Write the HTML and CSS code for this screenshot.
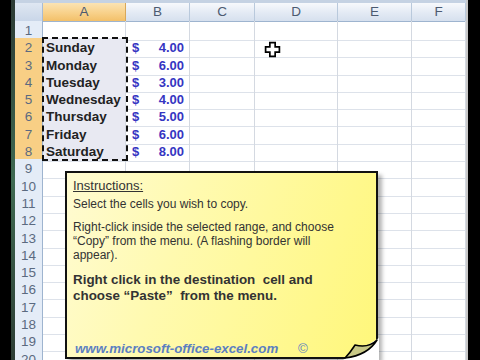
FILE: index.html
```html
<!DOCTYPE html>
<html lang="en">
<head>
  <meta charset="UTF-8">
  <title>Copy and Paste</title>
  <link rel="stylesheet" href="styles.css">
</head>
<body>
  <div class="screen">
    <div class="edge-black"></div>
    <div class="edge-green"></div>

    <div class="sheet">
      <div class="band"></div>
      <div class="row head">
        <div class="corner"></div>
        <div class="col sel">A</div>
        <div class="col">B</div>
        <div class="col">C</div>
        <div class="col">D</div>
        <div class="col">E</div>
        <div class="col">F</div>
      </div>
      <div class="row"><div class="num">1</div><div class="c"></div><div class="c"></div><div class="c"></div><div class="c"></div><div class="c"></div><div class="c"></div></div>
      <div class="row"><div class="num sel">2</div><div class="c day">Sunday</div><div class="c money"><span>$</span><span>4.00</span></div><div class="c"></div><div class="c"></div><div class="c"></div><div class="c"></div></div>
      <div class="row"><div class="num sel">3</div><div class="c day">Monday</div><div class="c money"><span>$</span><span>6.00</span></div><div class="c"></div><div class="c"></div><div class="c"></div><div class="c"></div></div>
      <div class="row"><div class="num sel">4</div><div class="c day">Tuesday</div><div class="c money"><span>$</span><span>3.00</span></div><div class="c"></div><div class="c"></div><div class="c"></div><div class="c"></div></div>
      <div class="row"><div class="num sel">5</div><div class="c day">Wednesday</div><div class="c money"><span>$</span><span>4.00</span></div><div class="c"></div><div class="c"></div><div class="c"></div><div class="c"></div></div>
      <div class="row"><div class="num sel">6</div><div class="c day">Thursday</div><div class="c money"><span>$</span><span>5.00</span></div><div class="c"></div><div class="c"></div><div class="c"></div><div class="c"></div></div>
      <div class="row"><div class="num sel">7</div><div class="c day">Friday</div><div class="c money"><span>$</span><span>6.00</span></div><div class="c"></div><div class="c"></div><div class="c"></div><div class="c"></div></div>
      <div class="row"><div class="num sel">8</div><div class="c day">Saturday</div><div class="c money"><span>$</span><span>8.00</span></div><div class="c"></div><div class="c"></div><div class="c"></div><div class="c"></div></div>
      <div class="row"><div class="num">9</div><div class="c"></div><div class="c"></div><div class="c"></div><div class="c"></div><div class="c"></div><div class="c"></div></div>
      <div class="row"><div class="num">10</div><div class="c"></div><div class="c"></div><div class="c"></div><div class="c"></div><div class="c"></div><div class="c"></div></div>
      <div class="row"><div class="num">11</div><div class="c"></div><div class="c"></div><div class="c"></div><div class="c"></div><div class="c"></div><div class="c"></div></div>
      <div class="row"><div class="num">12</div><div class="c"></div><div class="c"></div><div class="c"></div><div class="c"></div><div class="c"></div><div class="c"></div></div>
      <div class="row"><div class="num">13</div><div class="c"></div><div class="c"></div><div class="c"></div><div class="c"></div><div class="c"></div><div class="c"></div></div>
      <div class="row"><div class="num">14</div><div class="c"></div><div class="c"></div><div class="c"></div><div class="c"></div><div class="c"></div><div class="c"></div></div>
      <div class="row"><div class="num">15</div><div class="c"></div><div class="c"></div><div class="c"></div><div class="c"></div><div class="c"></div><div class="c"></div></div>
      <div class="row"><div class="num">16</div><div class="c"></div><div class="c"></div><div class="c"></div><div class="c"></div><div class="c"></div><div class="c"></div></div>
      <div class="row"><div class="num">17</div><div class="c"></div><div class="c"></div><div class="c"></div><div class="c"></div><div class="c"></div><div class="c"></div></div>
      <div class="row"><div class="num">18</div><div class="c"></div><div class="c"></div><div class="c"></div><div class="c"></div><div class="c"></div><div class="c"></div></div>
      <div class="row"><div class="num">19</div><div class="c"></div><div class="c"></div><div class="c"></div><div class="c"></div><div class="c"></div><div class="c"></div></div>
      <div class="row"><div class="num">20</div><div class="c"></div><div class="c"></div><div class="c"></div><div class="c"></div><div class="c"></div><div class="c"></div></div>
    </div>

    <div class="edge-grey"></div>
    <div class="edge-right"></div>

    <!-- copy marquee round A2:A8 -->
    <div class="marquee"></div>

    <!-- cell cursor -->
    <svg class="cursor" width="17" height="17" viewBox="0 0 16 16">
      <path d="M5.5 1.5h5v4h4v5h-4v4h-5v-4h-4v-5h4z" fill="#fff" stroke="#000" stroke-width="1.6"/>
    </svg>

    <div class="note">
      <p class="title">Instructions:</p>
      <p>Select the cells you wish to copy.</p>
      <p>Right-click inside the selected range, and choose<br>“Copy” from the menu. (A flashing border will<br>appear).</p>
      <p class="bold">Right click in the destination&nbsp; cell and<br>choose “Paste”&nbsp; from the menu.</p>
      <p class="site">www.microsoft-office-excel.com <span class="copy">©</span></p>
      <svg class="curl" width="36" height="22" viewBox="0 0 36 22">
        <path d="M36 0 V22 H0 Z" fill="#fff"/>
        <path d="M2 20 C8 14 10 10 12 7 C20 9 28 8 34 2 C28 12 18 18 2 20 Z" fill="#c9c987" stroke="#000" stroke-width="1.6" stroke-linejoin="round"/>
      </svg>
    </div>
  </div>
</body>
</html>
```

FILE: styles.css
```css
body {
  margin: 0;
  background: #000;
  font-family: 'Liberation Sans', Arial, sans-serif;
}

.screen {
  position: relative;
  width: 480px;
  height: 360px;
  overflow: hidden;
  display: flex;
  background: #fff;
}

.edge-black {
  width: 11px;
  background: #000;
}

.edge-green {
  width: 4px;
  background: linear-gradient(to bottom, #2c3a34, #3f6a52 50%, #2d3d35);
}

.edge-grey {
  width: 2px;
  background: #c8c8c8;
}

.edge-right {
  width: 12px;
  background: #000;
}

.sheet {
  width: 451px;
  background: #fff;
}

.band {
  height: 3px;
  background: #c5d2e3;
}

.row {
  display: grid;
  grid-template-columns: 28px 83px 64px 65px 83px 74px 54px;
  height: 17.3px;
}

.row.head {
  height: 18px;
}

.corner {
  background: linear-gradient(#dfe7f2, #c9d6e8);
  border-right: 1px solid #a8bcd4;
  border-bottom: 1px solid #9eb4cf;
}

.col {
  background: linear-gradient(#f7f9fc, #e3eaf4 55%, #d6e0ee);
  border-right: 1px solid #b9c9dc;
  border-bottom: 1px solid #9eb4cf;
  color: #4c5a70;
  font-size: 13.5px;
  text-align: center;
  line-height: 18px;
}

.col.sel {
  background: linear-gradient(#fbe3b3, #f8d18a 55%, #f3c069);
  border-right-color: #d8a85a;
}

.num {
  background: #e4ecf7;
  border-right: 1px solid #9eb4cf;
  border-bottom: 1px solid #c5d3e4;
  color: #5b6a80;
  font-size: 13.5px;
  text-align: center;
  line-height: 19px;
}

.num.sel {
  background: #f8cf85;
  border-bottom-color: #e7b466;
}

.c {
  border-right: 1px solid #d4d9e1;
  border-bottom: 1px solid #dde2ea;
}

.c.day {
  background: #e8e9f2;
  color: #222;
  font-weight: bold;
  font-size: 13.5px;
  line-height: 19px;
  padding-left: 3px;
}

.c.money {
  display: flex;
  justify-content: space-between;
  padding: 0 5px 0 6px;
  color: #3535c2;
  font-weight: bold;
  font-size: 13px;
  line-height: 19px;
}

.marquee {
  position: absolute;
  left: 42px;
  top: 37px;
  width: 82px;
  height: 120px;
  border: 2px dashed #111;
}

.cursor {
  position: absolute;
  left: 264px;
  top: 41px;
}

.note {
  position: absolute;
  left: 65px;
  top: 171px;
  width: 297px;
  height: 174px;
  padding: 6px 6px 4px 6px;
  border: 2px solid #111;
  background: linear-gradient(110deg, #fffbd2 0%, #fffab0 35%, #fff77a 100%);
  box-shadow: 4px 4px 4px rgba(0, 0, 0, 0.3);
  color: #333;
  font-size: 12px;
  line-height: 14px;
}

.note p {
  margin: 0;
}

.note .title {
  font-size: 13px;
  text-decoration: underline;
  margin-bottom: 4px;
}

.note .title + p {
  margin-bottom: 9px;
}

.note .bold {
  margin-top: 10px;
  font-size: 13.4px;
  font-weight: bold;
  line-height: 16px;
}

.note .site {
  position: absolute;
  left: 8px;
  bottom: 1px;
  color: #5b7fc1;
  font-size: 13.3px;
  font-weight: bold;
  font-style: italic;
}

.note .copy {
  margin-left: 16px;
  font-style: normal;
  font-weight: normal;
}

.curl {
  position: absolute;
  right: -3px;
  bottom: -3px;
}
```
